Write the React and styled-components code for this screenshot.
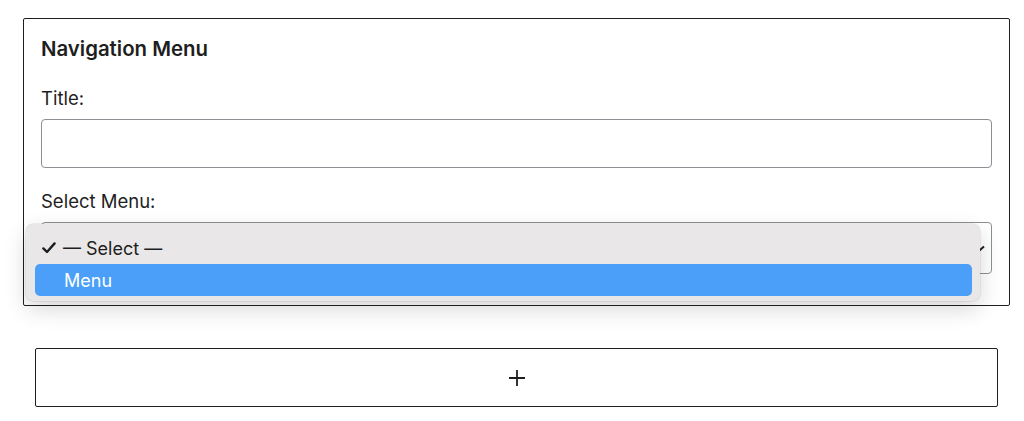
import React from "react";
import styled, { createGlobalStyle } from "styled-components";

const Global = createGlobalStyle`
  html, body { margin: 0; padding: 0; background: #fff; }
  body { font-family: Inter, "Noto Sans", sans-serif; color: #1e1e1e; }
  * { box-sizing: border-box; }
`;

const Page = styled.div`
  padding: 18px 15px 0 23px;
  display: flex;
  flex-direction: column;
`;

const Panel = styled.div`
  width: 987px;
  height: 288px;
  border: 1px solid #1e1e1e;
  border-radius: 2px;
  padding: 19px 17px 0 17px;
  display: flex;
  flex-direction: column;
`;

const Heading = styled.h3`
  margin: 0;
  font-size: 20.4px;
  font-weight: 600;
  line-height: 22px;
`;

const Label = styled.label`
  display: block;
  font-size: 18.5px;
  line-height: 22px;
  margin-top: ${(p) => p.$top}px;
`;

const TextInput = styled.input`
  margin-top: 10px;
  width: 951px;
  height: 49px;
  border: 1px solid #8c8f94;
  border-radius: 4px;
  background: #fff;
  outline: none;
`;

const SelectWrap = styled.div`
  position: relative;
  margin-top: 10px;
  width: 951px;
  height: 52px;
`;

const SelectBox = styled.div`
  width: 100%;
  height: 100%;
  border: 1px solid #8c8f94;
  border-radius: 4px;
  background: #fff;
  display: flex;
  align-items: center;
  justify-content: flex-end;
  padding-right: 6px;
`;

const Popup = styled.div`
  position: absolute;
  left: -15px;
  top: 2px;
  width: 954px;
  height: 77px;
  background: #e9e7e7;
  border-radius: 7px;
  box-shadow: 0 0 0 0.5px rgba(0, 0, 0, 0.12), 0 8px 22px rgba(0, 0, 0, 0.16);
  padding: 13px 8px 4px 9px;
  display: flex;
  flex-direction: column;
`;

const Option = styled.div`
  height: ${(p) => (p.$active ? 32 : 22)}px;
  margin-top: ${(p) => (p.$active ? 5 : 0)}px;
  display: flex;
  align-items: center;
  font-size: 18px;
  border-radius: 5px;
  padding-left: ${(p) => (p.$active ? 29 : 7)}px;
  background: ${(p) => (p.$active ? "#4b9ff8" : "transparent")};
  color: ${(p) => (p.$active ? "#fff" : "#1e1e1e")};
`;

const Check = styled.svg`
  width: 14px;
  height: 12px;
  margin-right: 7px;
`;

const AddButton = styled.button`
  margin: 42px 0 0 12px;
  width: 963px;
  height: 59px;
  border: 1px solid #1e1e1e;
  border-radius: 2px;
  background: #fff;
  display: flex;
  align-items: center;
  justify-content: center;
  padding: 0;
  cursor: pointer;
`;

export default function App() {
  return (
    <>
      <Global />
      <Page>
        <Panel>
          <Heading>Navigation Menu</Heading>
          <Label $top={27}>Title:</Label>
          <TextInput type="text" />
          <Label $top={22}>Select Menu:</Label>
          <SelectWrap>
            <SelectBox>
              <svg width="10" height="10" viewBox="0 0 10 10">
                <path d="M1 3.5 L5 7 L9 3.5" fill="none" stroke="#1e1e1e" strokeWidth="2" />
              </svg>
            </SelectBox>
            <Popup>
              <Option>
                <Check viewBox="0 0 14 12">
                  <path d="M1.4 6.4 L5 10 L12.6 1.4" fill="none" stroke="#1e1e1e" strokeWidth="2.4" strokeLinecap="round" strokeLinejoin="round" />
                </Check>
                — Select —
              </Option>
              <Option $active>Menu</Option>
            </Popup>
          </SelectWrap>
        </Panel>
        <AddButton aria-label="Add block">
          <svg width="18" height="18" viewBox="0 0 18 18">
            <path d="M9 1 V17 M1 9 H17" stroke="#1e1e1e" strokeWidth="1.8" />
          </svg>
        </AddButton>
      </Page>
    </>
  );
}
